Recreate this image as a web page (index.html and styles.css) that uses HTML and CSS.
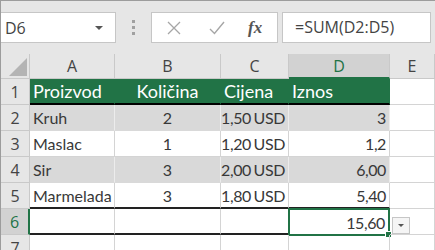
FILE: index.html
```html
<!DOCTYPE html>
<html>
<head>
<meta charset="utf-8">
<link rel="stylesheet" href="styles.css">
</head>
<body>
<div class="app">
  <div class="toolbar">
    <div class="namebox">
      <span class="namebox-text">D6</span>
      <span class="namebox-arrow"></span>
    </div>
    <div class="grip"><i></i><i></i><i></i></div>
    <div class="buttons">
      <svg class="btn-x" width="14" height="14" viewBox="0 0 14 14"><path d="M1 1L13 13M13 1L1 13" stroke="#a6a6a6" stroke-width="1.3" fill="none"/></svg>
      <svg class="btn-check" width="16" height="14" viewBox="0 0 16 14"><path d="M1 8L5.5 12.5L15 1" stroke="#a6a6a6" stroke-width="1.4" fill="none"/></svg>
      <span class="btn-fx">fx</span>
    </div>
    <div class="formula">=SUM(D2:D5)</div>
  </div>
  <div class="sheet">
    <div class="ch corner"><svg width="30" height="25" viewBox="0 0 30 25"><polygon points="26,4 26,22 8,22" fill="#b4b4b4"/></svg></div>
    <div class="ch">A</div>
    <div class="ch">B</div>
    <div class="ch">C</div>
    <div class="ch ch-sel">D</div>
    <div class="ch">E</div>

    <div class="rh">1</div>
    <div class="c hd">Proizvod</div>
    <div class="c hd center">Količina</div>
    <div class="c hd">Cijena</div>
    <div class="c hd">Iznos</div>
    <div class="c"></div>

    <div class="rh">2</div>
    <div class="c band">Kruh</div>
    <div class="c band center">2</div>
    <div class="c band right num">1,50 USD</div>
    <div class="c band right num">3</div>
    <div class="c"></div>

    <div class="rh">3</div>
    <div class="c">Maslac</div>
    <div class="c center">1</div>
    <div class="c right num">1,20 USD</div>
    <div class="c right num">1,2</div>
    <div class="c"></div>

    <div class="rh">4</div>
    <div class="c band">Sir</div>
    <div class="c band center">3</div>
    <div class="c band right num">2,00 USD</div>
    <div class="c band right num">6,00</div>
    <div class="c"></div>

    <div class="rh">5</div>
    <div class="c last">Marmelada</div>
    <div class="c last center">3</div>
    <div class="c last right num">1,80 USD</div>
    <div class="c last right num">5,40</div>
    <div class="c"></div>

    <div class="rh rh-sel">6</div>
    <div class="c total"></div>
    <div class="c total"></div>
    <div class="c total"></div>
    <div class="c total right num sel">15,60<span class="handle"></span><span class="autofill"><span class="autofill-arrow"></span></span></div>
    <div class="c"></div>

    <div class="rh">7</div>
    <div class="c"></div>
    <div class="c"></div>
    <div class="c"></div>
    <div class="c"></div>
    <div class="c"></div>
  </div>
</div>
</body>
</html>
```

FILE: styles.css
```css
* { box-sizing: border-box; }
html, body { margin: 0; padding: 0; }
body {
  width: 435px;
  height: 250px;
  overflow: hidden;
  background: #e6e6e6;
  font-family: Lato, "Liberation Sans", sans-serif;
}
.app {
  border-top: 1px solid #9c9c9c;
  border-left: 1px solid #9c9c9c;
  height: 250px;
}
.toolbar {
  height: 53px;
  padding-top: 11px;
  display: flex;
  align-items: flex-start;
}
.namebox {
  width: 115px;
  height: 31px;
  background: #fff;
  border: 1px solid #c6c6c6;
  border-left: none;
  display: flex;
  align-items: center;
  justify-content: space-between;
  padding: 0 12px 0 4px;
}
.namebox-text {
  font-family: "Open Sans", sans-serif;
  font-size: 16px;
  color: #444;
}
.namebox-arrow {
  width: 0;
  height: 0;
  border-left: 4px solid transparent;
  border-right: 4px solid transparent;
  border-top: 4px solid #555;
}
.grip {
  width: 35px;
  height: 31px;
  display: flex;
  flex-direction: column;
  align-items: center;
  justify-content: center;
  gap: 3px;
}
.grip i {
  display: block;
  width: 3px;
  height: 3px;
  background: #a0a0a0;
}
.buttons {
  width: 127px;
  height: 31px;
  background: #fff;
  border: 1px solid #c6c6c6;
  display: flex;
  align-items: center;
  padding-left: 15px;
}
.btn-x { margin-right: 28px; }
.btn-check { margin-right: 23px; }
.btn-fx {
  font-family: "Liberation Serif", serif;
  font-style: italic;
  font-weight: bold;
  font-size: 17px;
  color: #555;
}
.formula {
  margin-left: 4px;
  width: 149px;
  height: 31px;
  background: #fff;
  border: 1px solid #c6c6c6;
  font-family: "Open Sans", sans-serif;
  font-size: 16px;
  color: #444;
  padding-left: 12px;
  line-height: 29px;
}
.sheet {
  display: grid;
  grid-template-columns: 29px 85px 106px 68px 101px 45px;
  grid-template-rows: 25px repeat(7, 26px);
  background: #fff;
}
.ch, .rh {
  background: #e6e6e6;
  border-right: 1px solid #c9c9c9;
  border-bottom: 1px solid #c9c9c9;
  font-family: "Open Sans", sans-serif;
  font-size: 16px;
  color: #444;
  display: flex;
  align-items: center;
  justify-content: center;
}
.corner { display: block; }
.corner svg { display: block; }
.ch-sel {
  background: #d2d2d2;
  color: #217346;
  border-bottom: 2px solid #217346;
}
.rh-sel {
  background: #d2d2d2;
  color: #217346;
  border-right: 2px solid #217346;
}
.c {
  border-right: 1px solid #d4d4d4;
  border-bottom: 1px solid #d4d4d4;
  font-size: 16px;
  color: #383838;
  padding: 0 3px;
  display: flex;
  align-items: center;
  white-space: nowrap;
  position: relative;
}
.num { letter-spacing: -0.4px; word-spacing: -1px; }
.center { justify-content: center; }
.right { justify-content: flex-end; }
.hd {
  background: #217346;
  color: #fff;
  font-size: 18px;
  border-right-color: #217346;
  border-bottom: 2px solid #000;
}
.band { background: #d9d9d9; border-right-color: #ececec; border-bottom-color: #d9d9d9; }
.last { border-bottom: 2px solid #222; }
.total { border-bottom: 2px solid #222; }
.sel {
  border: 2px solid #217346;
  margin: -1px 0 -1px -1px;
  padding-right: 3px;
}
.handle {
  position: absolute;
  right: -4px;
  bottom: -4px;
  width: 7px;
  height: 7px;
  background: #217346;
  border: 1px solid #fff;
}
.autofill {
  position: absolute;
  left: 102px;
  top: 7px;
  width: 18px;
  height: 17px;
  background: #f5f5f5;
  border: 1px solid #c6c6c6;
  display: flex;
  align-items: center;
  justify-content: center;
}
.autofill-arrow {
  width: 0;
  height: 0;
  border-left: 3px solid transparent;
  border-right: 3px solid transparent;
  border-top: 3px solid #555;
}
```
